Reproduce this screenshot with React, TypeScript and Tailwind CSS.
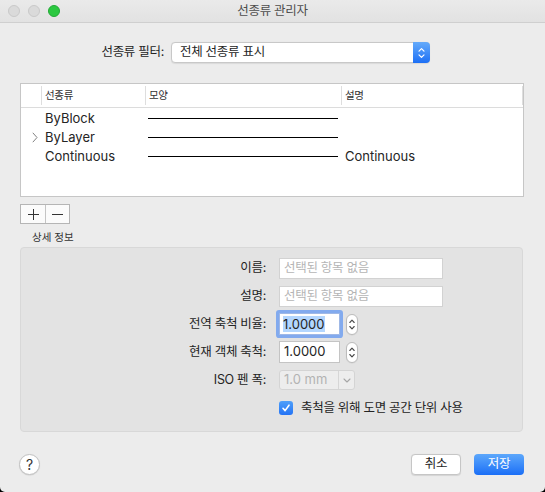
import React from 'react';

const ko = "text-[12.5px] tracking-[-0.3px]";

const UpDown: React.FC<{ color?: string }> = ({ color = 'currentColor' }) => (
  <svg width="9" height="14" viewBox="0 0 9 14" fill="none" stroke={color} strokeWidth={1.2} strokeLinecap="round" strokeLinejoin="round">
    <path d="M2 5.2 L4.5 2.7 L7 5.2" />
    <path d="M2 8.8 L4.5 11.3 L7 8.8" />
  </svg>
);

const Stepper: React.FC = () => (
  <div className="w-[12px] h-[21px] rounded-[6px] border border-[#bcbcbc] bg-white flex items-center justify-center text-[#4a4a4a] shadow-[0_0.5px_1px_rgba(0,0,0,0.08)]">
    <svg width="8" height="15" viewBox="0 0 8 15" fill="none" stroke="currentColor" strokeWidth={1.1} strokeLinecap="round" strokeLinejoin="round">
      <path d="M1.8 5.5 L4 3.2 L6.2 5.5" />
      <path d="M1.8 9.5 L4 11.8 L6.2 9.5" />
    </svg>
  </div>
);

const rows = [
  { name: 'ByBlock', desc: '', current: false },
  { name: 'ByLayer', desc: '', current: true },
  { name: 'Continuous', desc: 'Continuous', current: false },
];

const App: React.FC = () => {
  return (
    <div className="w-[545px] h-[492px] bg-black font-['Inter','Noto_Sans_CJK_KR',sans-serif] text-[13px] text-[#242424]">
      <div className="h-full bg-[#ececec] rounded-b-[5px] flex flex-col overflow-hidden">
        {/* title bar */}
        <div className="h-[23px] shrink-0 grid grid-cols-[1fr_auto_1fr] items-center border-b border-[#cfcfcf] bg-linear-to-b from-[#eaeaea] to-[#e2e2e2]">
          <div className="flex items-center gap-[8px] pl-[8px]">
            <div className="w-[12px] h-[12px] rounded-full bg-[#dadada] border border-[#c9c9c9]" />
            <div className="w-[12px] h-[12px] rounded-full bg-[#dadada] border border-[#c9c9c9]" />
            <div className="w-[12px] h-[12px] rounded-full bg-[#2bc840] border border-[#22a936]" />
          </div>
          <div className={`${ko} text-[#4d4d4d]`}>선종류 관리자</div>
          <div />
        </div>

        {/* filter */}
        <div className="mt-[19px] h-[21px] flex items-center gap-[7px]">
          <span className={`w-[164px] text-right ${ko}`}>선종류 필터:</span>
          <div className="w-[259px] h-[21px] rounded-[4px] border border-[#c8c8c8] bg-white flex shadow-[0_0.5px_1px_rgba(0,0,0,0.08)]">
            <div className={`flex-1 flex items-center pl-[8px] ${ko}`}>전체 선종류 표시</div>
            <div className="w-[17px] -my-px -mr-px rounded-r-[4px] bg-linear-to-b from-[#64aafa] to-[#1c6ff5] flex items-center justify-center">
              <UpDown color="#ffffff" />
            </div>
          </div>
        </div>

        {/* table */}
        <div className="mt-[20px] mx-[20px] w-[504px] h-[114px] border border-[#c6c6c6] bg-white shrink-0">
          <div className="h-[24px] border-b border-[#dcdcdc] flex items-center text-[10.5px] tracking-[-0.3px] text-[#333]">
            <div className="w-[20px]" />
            <div className="w-px h-[19px] bg-[#dedede]" />
            <div className="w-[103px] pl-[3px]">선종류</div>
            <div className="w-px h-[19px] bg-[#dedede]" />
            <div className="w-[195px] pl-[3px]">모양</div>
            <div className="w-px h-[19px] bg-[#dedede]" />
            <div className="w-[180px] pl-[3px]">설명</div>
            <div className="w-px h-[19px] bg-[#dedede]" />
          </div>
          <div className="pt-px">
            {rows.map((r) => (
              <div key={r.name} className="h-[19px] flex items-center">
                <div className="w-[20px] pl-[11px] flex items-center">
                  {r.current && (
                    <svg width="6" height="11" viewBox="0 0 6 11" fill="none" stroke="#808080" strokeWidth={1}>
                      <path d="M0.8 0.8 L5 5.5 L0.8 10.2" />
                    </svg>
                  )}
                </div>
                <div className="w-[104px] pl-[4px]">{r.name}</div>
                <div className="w-[196px] px-[3px] flex items-center">
                  <div className="h-px w-full bg-black" />
                </div>
                <div className="pl-[4px]">{r.desc}</div>
              </div>
            ))}
          </div>
        </div>

        {/* add / remove */}
        <div className="mt-[7px] ml-[20px] w-[50px] h-[20px] border border-[#b5b5b5] bg-[#fbfbfb] flex shrink-0">
          <div className="w-[24px] flex items-center justify-center">
            <svg width="11" height="11" viewBox="0 0 11 11" stroke="#333" strokeWidth={1}>
              <path d="M5.5 0 V11 M0 5.5 H11" />
            </svg>
          </div>
          <div className="flex-1 border-l border-[#c4c4c4] flex items-center justify-center">
            <svg width="11" height="11" viewBox="0 0 11 11" stroke="#333" strokeWidth={1}>
              <path d="M0 5.5 H11" />
            </svg>
          </div>
        </div>

        <div className="mt-[6px] h-[16px] pl-[32px] flex items-center text-[10.5px] text-[#333]">상세 정보</div>

        {/* details */}
        <div className="mt-[1px] mx-[20px] w-[503px] h-[185px] shrink-0 bg-[#e3e3e3] border border-[#d8d8d8] rounded-[4px] pt-[6px]">
          <div className={`grid grid-cols-[245px_1fr] gap-x-[13px] auto-rows-[28px] items-center ${ko}`}>
            <div className="text-right">이름:</div>
            <div className="w-[164px] h-[21px] bg-white border border-[#d2d2d2] flex items-center pl-[4px] text-[#b5b5b5]">선택된 항목 없음</div>

            <div className="text-right">설명:</div>
            <div className="w-[164px] h-[21px] bg-white border border-[#d2d2d2] flex items-center pl-[4px] text-[#b5b5b5]">선택된 항목 없음</div>

            <div className="text-right">전역 축척 비율:</div>
            <div className="flex items-center gap-[6px]">
              <div className="w-[61px] h-[22px] bg-white border border-[#9fb8e6] rounded-[1px] ring-[3px] ring-[#82aaee] flex items-center pl-[3px] text-[13px] tracking-normal">
                <span className="bg-[#b3d6fe] leading-[16px]">1.0000</span>
              </div>
              <Stepper />
            </div>

            <div className="text-right">현재 객체 축척:</div>
            <div className="flex items-center gap-[6px]">
              <div className="w-[61px] h-[22px] bg-white border border-[#c4c4c4] flex items-center pl-[4px] text-[13px] tracking-normal">1.0000</div>
              <Stepper />
            </div>

            <div className="text-right">ISO 펜 폭:</div>
            <div className="w-[76px] h-[20px] bg-[#ededed] border border-[#d4d4d4] rounded-[3px] flex text-[#b3b3b3]">
              <div className="flex-1 flex items-center pl-[4px] text-[13px] tracking-normal">1.0 mm</div>
              <div className="w-[16px] border-l border-[#d6d6d6] flex items-center justify-center">
                <svg width="8" height="5" viewBox="0 0 8 5" fill="none" stroke="#a6a6a6" strokeWidth={1.1} strokeLinecap="round" strokeLinejoin="round">
                  <path d="M1 1 L4 4 L7 1" />
                </svg>
              </div>
            </div>

            <div />
            <div className="h-[22px] flex items-center gap-[8px]">
              <div className="w-[14px] h-[14px] rounded-[3px] bg-linear-to-b from-[#4f9ff9] to-[#2473f5] flex items-center justify-center">
                <svg width="10" height="10" viewBox="0 0 10 10" fill="none" stroke="#ffffff" strokeWidth={1.6} strokeLinecap="round" strokeLinejoin="round">
                  <path d="M2 5.3 L4.1 7.6 L8 2.2" />
                </svg>
              </div>
              <span>축척을 위해 도면 공간 단위 사용</span>
            </div>
          </div>
        </div>

        {/* footer */}
        <div className="mt-[22px] h-[21px] flex items-center pl-[19px] pr-[21px]">
          <div className="w-[21px] h-[21px] rounded-full bg-white border border-[#c2c2c2] shadow-[0_0.5px_1px_rgba(0,0,0,0.12)] flex items-center justify-center text-[14px] text-[#333]">?</div>
          <div className="flex-1" />
          <div className={`w-[50px] h-[21px] rounded-[4px] bg-white border border-[#c6c6c6] shadow-[0_0.5px_1px_rgba(0,0,0,0.1)] flex items-center justify-center ${ko}`}>취소</div>
          <div className={`ml-[13px] w-[50px] h-[21px] rounded-[4px] bg-linear-to-b from-[#5ca7fb] to-[#1a6ef6] flex items-center justify-center text-white ${ko}`}>저장</div>
        </div>
      </div>
    </div>
  );
};

export default App;
